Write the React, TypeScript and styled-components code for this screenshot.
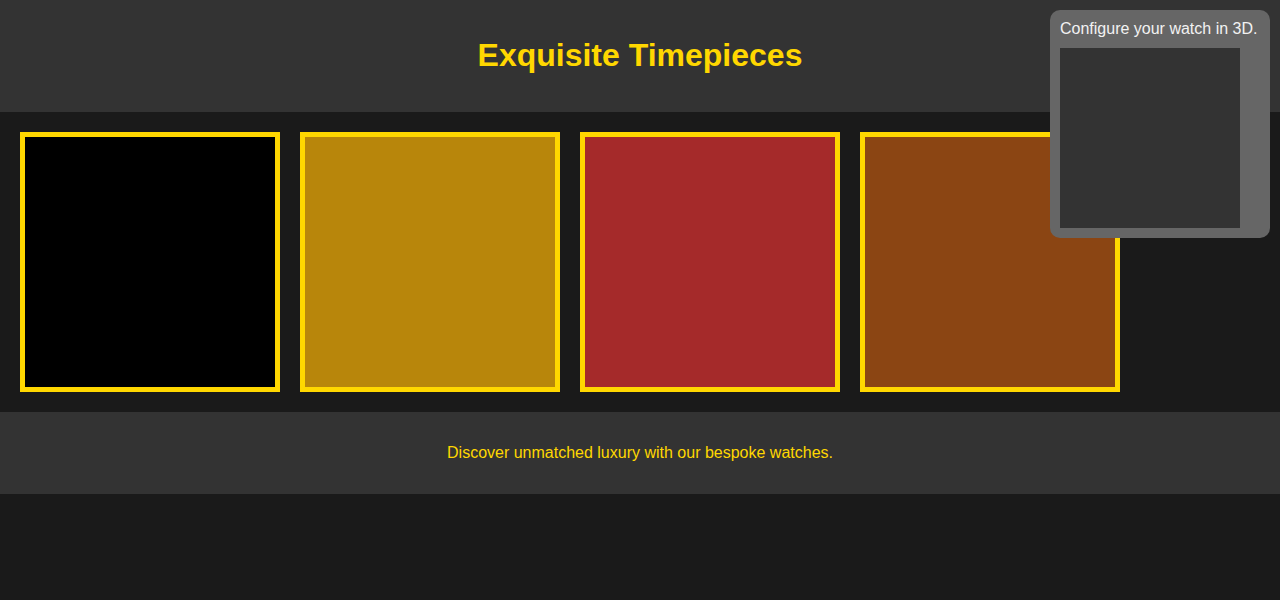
import React from 'react';
import styled, { createGlobalStyle } from 'styled-components';

const GlobalStyle = createGlobalStyle`
  html, body {
    margin: 0;
    padding: 0;
    background-color: #1a1a1a;
    font-family: "Liberation Sans", Arial, sans-serif;
  }
`;

const Header = styled.header`
  background-color: #333;
  padding: 16px;
  text-align: center;
`;

const Title = styled.h1`
  margin: 21.44px 0;
  font-size: 32px;
  line-height: 37px;
  font-weight: bold;
  color: #ffd700;
`;

const Gallery = styled.section`
  display: flex;
  flex-wrap: wrap;
  gap: 20px;
  padding: 20px;
`;

const WatchCard = styled.div<{ $color: string }>`
  width: 250px;
  height: 250px;
  border: 5px solid #ffd700;
  background-color: ${({ $color }) => $color};
`;

const Footer = styled.footer`
  background-color: #333;
  padding: 16px;
  text-align: center;
`;

const Tagline = styled.p`
  margin: 16px 0;
  font-size: 16px;
  line-height: 18px;
  color: #ffd700;
`;

const ConfigPanel = styled.aside`
  position: fixed;
  top: 10px;
  right: 10px;
  width: 200px;
  padding: 10px;
  background-color: #666;
  border-radius: 10px;
  color: #f2f2f2;
`;

const PanelLabel = styled.p`
  margin: 0 0 10px;
  font-size: 16px;
  line-height: 18px;
  white-space: nowrap;
`;

const Viewport = styled.div`
  width: 180px;
  height: 180px;
  background-color: #333;
`;

const watches = ['#000000', '#b8860b', '#a52a2a', '#8b4513'];

export default function App() {
  return (
    <>
      <GlobalStyle />
      <Header>
        <Title>Exquisite Timepieces</Title>
      </Header>
      <Gallery>
        {watches.map((c) => (
          <WatchCard key={c} $color={c} />
        ))}
      </Gallery>
      <Footer>
        <Tagline>Discover unmatched luxury with our bespoke watches.</Tagline>
      </Footer>
      <ConfigPanel>
        <PanelLabel>Configure your watch in 3D.</PanelLabel>
        <Viewport />
      </ConfigPanel>
    </>
  );
}
